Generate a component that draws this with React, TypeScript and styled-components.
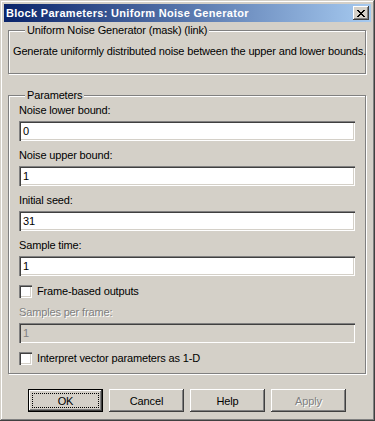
import { ReactElement } from 'react';
import styled, { createGlobalStyle } from 'styled-components';

const GlobalStyle = createGlobalStyle`
  html, body {
    margin: 0;
    padding: 0;
    background: #d4d0c8;
  }
`;

const Styled = {
  Window: styled.div`
    box-sizing: border-box;
    width: 375px;
    height: 421px;
    padding: 4px;
    display: flex;
    flex-direction: column;
    background: #d4d0c8;
    box-shadow: inset -1px -1px #404040, inset 1px 1px #d4d0c8,
      inset -2px -2px #808080, inset 2px 2px #ffffff;
    font-family: 'Liberation Sans', Arial, sans-serif;
    font-size: 11px;
    letter-spacing: -0.15px;
    color: #000;
  `,
  TitleBar: styled.div`
    display: flex;
    align-items: center;
    justify-content: space-between;
    height: 18px;
    padding: 0 2px;
    background: linear-gradient(to right, #0a246a, #a6caf0);
  `,
  Title: styled.span`
    color: #fff;
    font-weight: bold;
    font-size: 11px;
    letter-spacing: 0.3px;
  `,
  CloseButton: styled.div`
    box-sizing: border-box;
    width: 16px;
    height: 14px;
    display: flex;
    align-items: center;
    justify-content: center;
    background: #d4d0c8;
    box-shadow: inset -1px -1px #404040, inset 1px 1px #fff,
      inset -2px -2px #808080;
  `,
  Body: styled.div`
    display: flex;
    flex-direction: column;
    padding: 2px 5px 0 4px;
  `,
  Group: styled.fieldset<{ $height: number; $gap?: number; $padTop?: number }>`
    box-sizing: border-box;
    height: ${(p) => p.$height}px;
    margin: ${(p) => p.$gap ?? 0}px 0 0;
    padding: ${(p) => p.$padTop ?? 0}px 10px 0;
    border: 1px solid #808080;
    box-shadow: inset 1px 1px #fff, 1px 1px #fff;
    display: flex;
    flex-direction: column;
    min-width: 0;
  `,
  Legend: styled.legend`
    margin-left: 6px;
    padding: 0 2px;
    line-height: 13px;
    background: #d4d0c8;
  `,
  Description: styled.div`
    margin: 8px 0 0 -6px;
    line-height: 13px;
    white-space: nowrap;
  `,
  Label: styled.div<{ $disabled?: boolean }>`
    line-height: 13px;
    margin: 1px 0 4px;
    color: ${(p) => (p.$disabled ? '#808080' : '#000')};
    text-shadow: ${(p) => (p.$disabled ? '1px 1px #fff' : 'none')};
  `,
  TextField: styled.div<{ $disabled?: boolean }>`
    box-sizing: border-box;
    height: 20px;
    padding: 0 4px;
    margin-bottom: 7px;
    display: flex;
    align-items: center;
    background: ${(p) => (p.$disabled ? '#d4d0c8' : '#fff')};
    color: ${(p) => (p.$disabled ? '#808080' : '#000')};
    box-shadow: inset 1px 1px #808080, inset 2px 2px #404040,
      inset -1px -1px #fff, inset -2px -2px #d4d0c8;
  `,
  CheckRow: styled.div`
    display: flex;
    align-items: center;
    gap: 5px;
    margin: 2px 0 7px;
    line-height: 13px;
  `,
  CheckBox: styled.span`
    box-sizing: border-box;
    width: 13px;
    height: 13px;
    background: #fff;
    box-shadow: inset 1px 1px #808080, inset 2px 2px #404040,
      inset -1px -1px #fff, inset -2px -2px #d4d0c8;
  `,
  ButtonRow: styled.div`
    display: flex;
    justify-content: center;
    gap: 6px;
    margin-top: 15px;
  `,
  Button: styled.button<{ $default?: boolean }>`
    box-sizing: border-box;
    width: 75px;
    height: 23px;
    padding: 0;
    position: relative;
    font-family: 'Liberation Sans', Arial, sans-serif;
    font-size: 11px;
    letter-spacing: -0.15px;
    color: #000;
    background: #d4d0c8;
    border: ${(p) => (p.$default ? '1px solid #000' : 'none')};
    box-shadow: inset -1px -1px #404040, inset 1px 1px #fff,
      inset -2px -2px #808080;

    &:disabled {
      color: #808080;
      text-shadow: 1px 1px #fff;
    }
  `,
  FocusRing: styled.span`
    position: absolute;
    inset: 3px;
    border: 1px dotted #000;
  `,
};

const params = [
  { label: 'Noise lower bound:', value: '0' },
  { label: 'Noise upper bound:', value: '1' },
  { label: 'Initial seed:', value: '31' },
  { label: 'Sample time:', value: '1' },
];

export default function App(): ReactElement {
  return (
    <>
      <GlobalStyle />
      <Styled.Window>
        <Styled.TitleBar>
          <Styled.Title>Block Parameters: Uniform Noise Generator</Styled.Title>
          <Styled.CloseButton>
            <svg width="8" height="7" viewBox="0 0 8 7">
              <path
                d="M0 0h2v1h1v1h2V1h1V0h2v1H7v1H6v1H5v1h1v1h1v1h1v1H6V6H5V5H3v1H2v1H0V6h1V5h1V4h1V3H2V2H1V1H0z"
                fill="#000"
              />
            </svg>
          </Styled.CloseButton>
        </Styled.TitleBar>
        <Styled.Body>
          <Styled.Group $height={50}>
            <Styled.Legend>Uniform Noise Generator (mask) (link)</Styled.Legend>
            <Styled.Description>
              Generate uniformly distributed noise between the upper and lower bounds.
            </Styled.Description>
          </Styled.Group>
          <Styled.Group $height={285} $gap={15} $padTop={1}>
            <Styled.Legend>Parameters</Styled.Legend>
            {params.map((p) => (
              <div key={p.label}>
                <Styled.Label>{p.label}</Styled.Label>
                <Styled.TextField>{p.value}</Styled.TextField>
              </div>
            ))}
            <Styled.CheckRow>
              <Styled.CheckBox />
              Frame-based outputs
            </Styled.CheckRow>
            <Styled.Label $disabled>Samples per frame:</Styled.Label>
            <Styled.TextField $disabled>1</Styled.TextField>
            <Styled.CheckRow>
              <Styled.CheckBox />
              Interpret vector parameters as 1-D
            </Styled.CheckRow>
          </Styled.Group>
          <Styled.ButtonRow>
            <Styled.Button $default>
              <Styled.FocusRing />
              OK
            </Styled.Button>
            <Styled.Button>Cancel</Styled.Button>
            <Styled.Button>Help</Styled.Button>
            <Styled.Button disabled>Apply</Styled.Button>
          </Styled.ButtonRow>
        </Styled.Body>
      </Styled.Window>
    </>
  );
}
